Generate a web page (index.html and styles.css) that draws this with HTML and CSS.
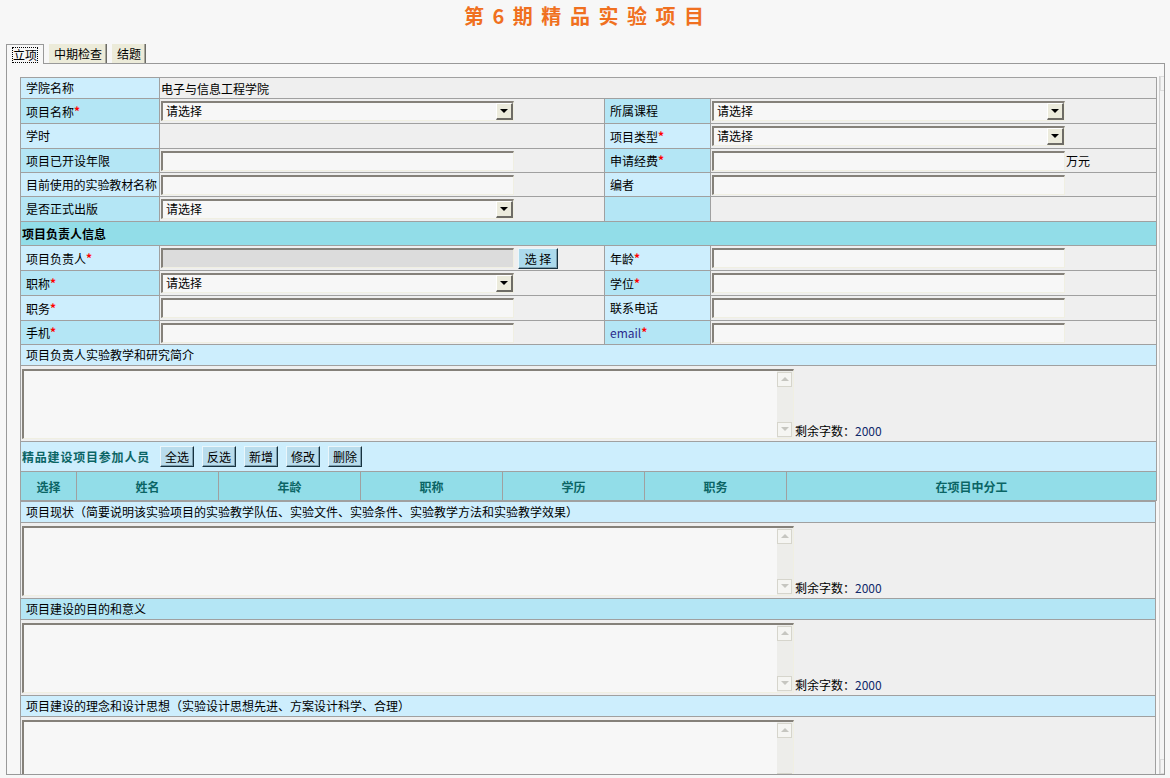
FILE: index.html
```html
<!DOCTYPE html>
<html lang="zh-CN">
<head>
<meta charset="utf-8">
<title>第6期精品实验项目</title>
<link rel="stylesheet" href="styles.css">
</head>
<body>
<h1 class="title">第 6 期 精 品 实 验 项 目</h1>
<div class="tabs">
  <div class="tab active"><span class="focus">立项</span></div>
  <div class="tab">中期检查</div>
  <div class="tab">结题</div>
</div>
<div class="panel">
  <table class="form">
    <colgroup><col class="c1"><col class="c2"><col class="c3"><col class="c4"></colgroup>
    <tr class="h21">
      <td class="lab l1">学院名称</td>
      <td class="val" colspan="3">电子与信息工程学院</td>
    </tr>
    <tr class="h25">
      <td class="lab l2">项目名称<b class="req">*</b></td>
      <td class="val"><div class="sel"><span class="sel-t">请选择</span><span class="sel-b"><i class="tri"></i></span></div></td>
      <td class="lab l2">所属课程</td>
      <td class="val"><div class="sel"><span class="sel-t">请选择</span><span class="sel-b"><i class="tri"></i></span></div></td>
    </tr>
    <tr class="h25">
      <td class="lab l1">学时</td>
      <td class="val"></td>
      <td class="lab l1">项目类型<b class="req">*</b></td>
      <td class="val"><div class="sel"><span class="sel-t">请选择</span><span class="sel-b"><i class="tri"></i></span></div></td>
    </tr>
    <tr class="h24">
      <td class="lab l2">项目已开设年限</td>
      <td class="val"><input class="txt" type="text"></td>
      <td class="lab l2">申请经费<b class="req">*</b></td>
      <td class="val"><input class="txt" type="text"><span class="unit">万元</span></td>
    </tr>
    <tr class="h24">
      <td class="lab l1 tight">目前使用的实验教材名称</td>
      <td class="val"><input class="txt" type="text"></td>
      <td class="lab l1">编者</td>
      <td class="val"><input class="txt" type="text"></td>
    </tr>
    <tr class="h25">
      <td class="lab l2">是否正式出版</td>
      <td class="val"><div class="sel"><span class="sel-t">请选择</span><span class="sel-b"><i class="tri"></i></span></div></td>
      <td class="lab l2"></td>
      <td class="val"></td>
    </tr>
    <tr class="h24">
      <td class="head" colspan="4">项目负责人信息</td>
    </tr>
    <tr class="h25">
      <td class="lab l1">项目负责人<b class="req">*</b></td>
      <td class="val"><input class="txt dis" type="text" disabled><button class="btn pick" type="button">选 择</button></td>
      <td class="lab l1">年龄<b class="req">*</b></td>
      <td class="val"><input class="txt" type="text"></td>
    </tr>
    <tr class="h25">
      <td class="lab l2">职称<b class="req">*</b></td>
      <td class="val"><div class="sel"><span class="sel-t">请选择</span><span class="sel-b"><i class="tri"></i></span></div></td>
      <td class="lab l2">学位<b class="req">*</b></td>
      <td class="val"><input class="txt" type="text"></td>
    </tr>
    <tr class="h25">
      <td class="lab l1">职务<b class="req">*</b></td>
      <td class="val"><input class="txt" type="text"></td>
      <td class="lab l1">联系电话</td>
      <td class="val"><input class="txt" type="text"></td>
    </tr>
    <tr class="h24">
      <td class="lab l2">手机<b class="req">*</b></td>
      <td class="val"><input class="txt" type="text"></td>
      <td class="lab l2"><span class="email">email</span><b class="req">*</b></td>
      <td class="val"><input class="txt" type="text"></td>
    </tr>
    <tr class="h21">
      <td class="lab l1" colspan="4">项目负责人实验教学和研究简介</td>
    </tr>
    <tr class="h76">
      <td class="val tacell" colspan="4"><div class="ta"><textarea></textarea><div class="sb"><span class="sb-btn up"><i></i></span><span class="sb-track"></span><span class="sb-btn down"><i></i></span></div></div><span class="remain">剩余字数：<span class="num">2000</span></span></td>
    </tr>
    <tr class="h30">
      <td class="l1 tools" colspan="4"><span class="tools-t">精品建设项目参加人员</span><button class="btn" type="button">全选</button><button class="btn" type="button">反选</button><button class="btn" type="button">新增</button><button class="btn" type="button">修改</button><button class="btn" type="button">删除</button></td>
    </tr>
  </table>
  <table class="people">
    <colgroup><col class="p1"><col class="p2"><col class="p2"><col class="p2"><col class="p2"><col class="p2"><col class="p3"></colgroup>
    <tr class="h31">
      <th>选择</th><th>姓名</th><th>年龄</th><th>职称</th><th>学历</th><th>职务</th><th>在项目中分工</th>
    </tr>
  </table>
  <table class="form rest">
    <tr class="h21">
      <td class="lab l1">项目现状（简要说明该实验项目的实验教学队伍、实验文件、实验条件、实验教学方法和实验教学效果）</td>
    </tr>
    <tr class="h76">
      <td class="val tacell"><div class="ta"><textarea></textarea><div class="sb"><span class="sb-btn up"><i></i></span><span class="sb-track"></span><span class="sb-btn down"><i></i></span></div></div><span class="remain">剩余字数：<span class="num">2000</span></span></td>
    </tr>
    <tr class="h21">
      <td class="lab l2">项目建设的目的和意义</td>
    </tr>
    <tr class="h76">
      <td class="val tacell"><div class="ta"><textarea></textarea><div class="sb"><span class="sb-btn up"><i></i></span><span class="sb-track"></span><span class="sb-btn down"><i></i></span></div></div><span class="remain">剩余字数：<span class="num">2000</span></span></td>
    </tr>
    <tr class="h21">
      <td class="lab l1">项目建设的理念和设计思想（实验设计思想先进、方案设计科学、合理）</td>
    </tr>
    <tr class="h76">
      <td class="val tacell"><div class="ta"><textarea></textarea><div class="sb"><span class="sb-btn up"><i></i></span><span class="sb-track"></span><span class="sb-btn down"><i></i></span></div></div></td>
    </tr>
  </table>
  <div class="pscroll"><span class="pbtn"></span><span class="ptrack"></span><span class="pbtn"></span></div>
</div>
</body>
</html>
```
FILE: styles.css
```css
* { box-sizing: border-box; }
html, body { margin: 0; padding: 0; }
body {
  width: 1170px;
  height: 778px;
  overflow: hidden;
  background: #f7f7f7;
  color: #000;
  font-family: "Noto Sans CJK SC", "Liberation Sans", sans-serif;
  font-size: 12px;
}

.title {
  margin: 0;
  height: 44px;
  padding-top: 4px;
  text-align: center;
  font-size: 20px;
  line-height: 24px;
  font-weight: bold;
  color: #f07020;
  letter-spacing: 2px;
}

/* tabs */
.tabs {
  position: relative;
  z-index: 2;
  display: flex;
  align-items: flex-start;
  gap: 5px;
  height: 19px;
  margin-left: 6px;
}
.tab {
  height: 19px;
  padding: 0 4px 0 5px;
  line-height: 19px;
  background: #ecebd9;
  border-right: 1px solid #6c6c66;
  box-shadow: inset -1px 0 0 #aaa89c;
  white-space: nowrap;
}
.tab.active {
  height: 20px;
  padding: 0 6px;
  background: #f7f7f7;
  border: 1px solid #999;
  border-bottom: none;
  box-shadow: none;
}
.focus {
  display: inline-block;
  margin-top: 1px;
  line-height: 14px;
  outline: 1px dotted #000;
  outline-offset: 0;
}

/* panel */
.panel {
  position: relative;
  width: 1159px;
  height: 712px;
  margin-left: 6px;
  padding: 13px 0 0 13px;
  border: 1px solid #999;
  overflow: hidden;
}

.form, .people {
  border-collapse: collapse;
  table-layout: fixed;
  width: 1136px;
}
.c1 { width: 139px; }
.c2 { width: 445px; }
.c3 { width: 106px; }
.c4 { width: 446px; }

.form td, .people th {
  border: 1px solid #a0a0a0;
  padding: 0;
  white-space: nowrap;
  overflow: hidden;
  vertical-align: middle;
}

.h21 td { height: 21px; }
.h24 td { height: 24px; }
.h25 td { height: 25px; }
.h30 td { height: 30px; }
.h31 th { height: 29px; }
.h76 td { height: 76px; }

.lab { padding-left: 5px !important; padding-bottom: 1px !important; }
.lab.tight { letter-spacing: -0.1px; }
.l1 { background: #cdeefd; }
.l2 { background: #b4e6f5; }
.val { background: #efefef; padding-left: 1px !important; }

.head {
  background: #92dde8;
  font-weight: bold;
  padding-left: 1px !important;
  padding-bottom: 1px !important;
}

.req {
  color: #ff0000;
  font-weight: bold;
  font-size: 12px;
  vertical-align: 1px;
}
.email { color: #2b2b8c; }
.unit { margin-left: 1px; vertical-align: middle; }

/* fake select */
.sel {
  display: inline-flex;
  align-items: stretch;
  width: 353px;
  height: 20px;
  border-style: solid;
  border-width: 2px 1px 1px 2px;
  border-color: #85817a #f0efe2 #f0efe2 #85817a;
  background: #f7f7f7;
  vertical-align: middle;
}
.sel-t {
  flex: 1;
  padding-left: 3px;
  line-height: 16px;
}
.sel-b {
  width: 17px;
  display: flex;
  align-items: center;
  justify-content: center;
  background: #ecebdc;
  border-style: solid;
  border-width: 1px 2px 2px 1px;
  border-color: #fff #6e6c66 #6e6c66 #fff;
}
.tri {
  width: 0;
  height: 0;
  border-left: 4px solid transparent;
  border-right: 4px solid transparent;
  border-top: 4px solid #000;
}

/* text input */
.txt {
  width: 353px;
  height: 20px;
  margin: 0;
  padding: 0 2px;
  border-style: solid;
  border-width: 2px 1px 1px 2px;
  border-color: #85817a #f0efe2 #f0efe2 #85817a;
  background: #f7f7f7;
  font: inherit;
  vertical-align: middle;
  outline: none;
}
.txt.dis { background: #dcdcdc; }

/* buttons */
.btn {
  width: 34px;
  height: 21px;
  margin: 0 0 0 8px;
  padding: 0;
  background: #b9dcec;
  border-style: solid;
  border-width: 1px;
  border-color: #eaf6fb #17323f #17323f #eaf6fb;
  box-shadow: inset -1px -1px 0 #7c9eae;
  font: inherit;
  color: #000;
  vertical-align: middle;
}
.btn.pick {
  width: 40px;
  margin-left: 4px;
  background: #acdaec;
}

.tools { padding-left: 1px !important; }
.tools-t {
  display: inline-block;
  width: 130px;
  font-weight: bold;
  color: #0b6565;
  vertical-align: middle;
  letter-spacing: 0.8px;
}

/* participants header */
.people { margin-top: -1px; }
.p1 { width: 56px; }
.p2 { width: 142px; }
.p3 { width: 370px; }
.people th {
  background: #92dde8;
  color: #0b6565;
  font-weight: bold;
  text-align: center;
  font-size: 12px;
}

/* textarea box */
.tacell { padding: 0 0 0 1px !important; }
.ta {
  display: inline-flex;
  width: 772px;
  height: 70px;
  border-style: solid;
  border-width: 2px 1px 1px 2px;
  border-color: #85817a #f0efe2 #f0efe2 #85817a;
  background: #f7f7f7;
  vertical-align: bottom;
}
.ta textarea {
  flex: 1;
  margin: 0;
  padding: 0;
  border: 0;
  background: transparent;
  resize: none;
  outline: none;
  font: inherit;
}
.sb {
  width: 16px;
  display: flex;
  flex-direction: column;
  background: #ededea;
  padding: 1px 1px 1px 0;
}
.sb-btn {
  height: 15px;
  display: flex;
  align-items: center;
  justify-content: center;
  border: 1px solid #d6d5cc;
  background: #f5f5f2;
}
.sb-track { flex: 1; }
.sb-btn i {
  width: 0;
  height: 0;
  border-left: 4px solid transparent;
  border-right: 4px solid transparent;
}
.sb-btn.up i { border-bottom: 4px solid #c6c6c0; }
.sb-btn.down i { border-top: 4px solid #c6c6c0; }
.remain {
  display: inline-block;
  vertical-align: bottom;
  line-height: 14px;
  margin-left: 1px;
  padding-bottom: 1px;
}
.num { color: #102a6a; }

/* page scrollbar edge on the right */
.pscroll {
  position: absolute;
  top: 12px;
  left: 1152px;
  width: 8px;
  bottom: 0;
  display: flex;
  flex-direction: column;
  border-left: 1px solid #d0d0d0;
  background: #f4f4f4;
}
.pbtn {
  height: 15px;
  border: 1px solid #dcdcdc;
  border-right: none;
}
.ptrack { flex: 1; }
```
